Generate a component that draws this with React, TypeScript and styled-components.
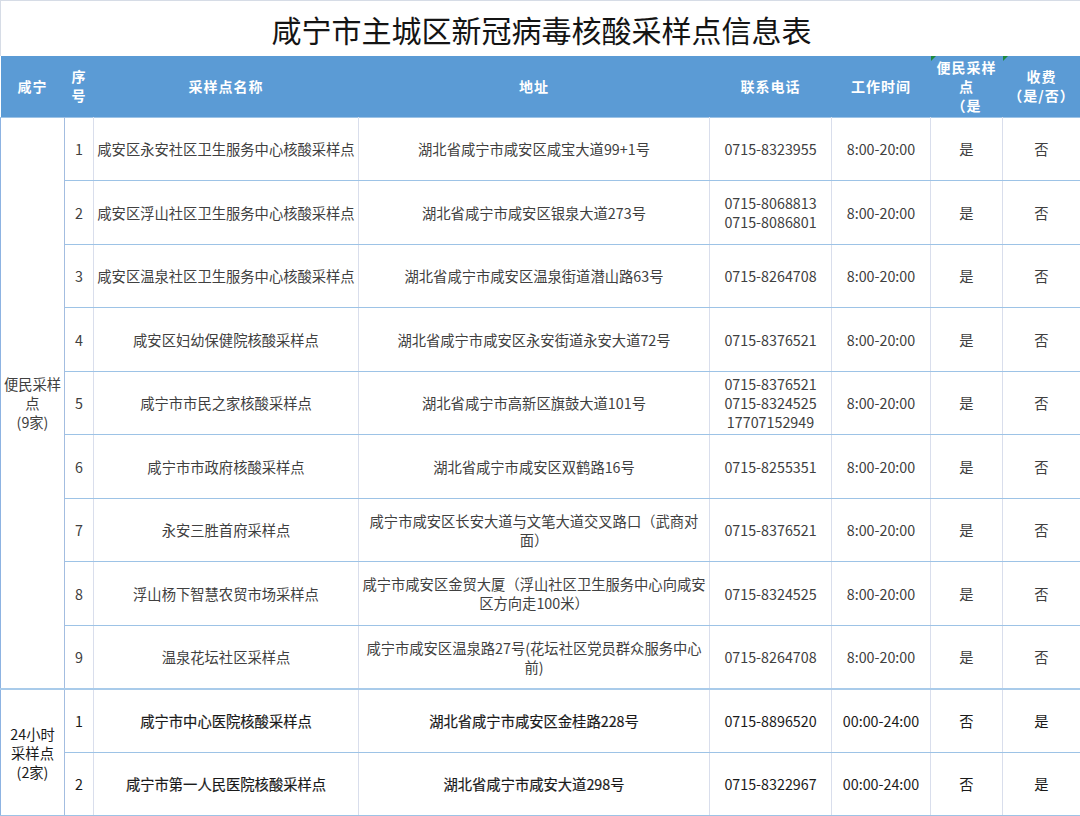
import React from "react";
import styled, { createGlobalStyle, css } from "styled-components";

const Global = createGlobalStyle`
  html, body { margin: 0; padding: 0; background: #ffffff; }
  body { font-family: "Noto Sans CJK SC", "Noto Sans", sans-serif; }
`;

const Sheet = styled.table`
  width: 1080px;
  table-layout: fixed;
  border-collapse: collapse;
  font-family: "Noto Sans CJK SC", "Noto Sans", sans-serif;
`;

const TitleCell = styled.td`
  height: 55px;
  padding: 0 0 0 2px;
  text-align: center;
  vertical-align: middle;
  font-size: 30px;
  font-weight: 400;
  line-height: 34px;
  color: #141414;
  border: 1px solid #d6dce6;
  border-bottom: none;
`;

const HeadRow = styled.tr`
  height: 61px;
  background: #5b9bd5;
`;

const HeadCell = styled.th`
  position: relative;
  padding: 0;
  color: #ffffff;
  font-size: 14px;
  font-weight: 700;
  line-height: 19px;
  letter-spacing: 1px;
  text-align: center;
  vertical-align: middle;
  background: #5b9bd5;
  border: none;
`;

const Marker = styled.span`
  position: absolute;
  left: 0;
  top: 0;
  width: 0;
  height: 0;
  border-top: 5px solid #1f8a3c;
  border-right: 5px solid transparent;
`;

const BodyRow = styled.tr<{ $sep?: boolean }>`
  height: 63.5px;
  ${(p) =>
    p.$sep &&
    css`
      border-top: 2px solid #a9cbea;
    `}
`;

const Cell = styled.td<{ $strong?: boolean; $group?: boolean; $dark?: boolean }>`
  padding: 0 3px;
  text-align: center;
  vertical-align: middle;
  font-size: 14.3px;
  line-height: 19px;
  color: ${(p) => (p.$strong || p.$dark ? "#1a1a1a" : "#404040")};
  font-weight: 400;
  -webkit-text-stroke: ${(p) => (p.$strong ? "0.2px #1a1a1a" : "0")};
  border-top: 1px solid #9dc3e6;
  border-bottom: 1px solid #9dc3e6;
  border-left: 1px solid #d9deec;
  border-right: 1px solid #d9deec;
  &:last-child {
    border-right: 1px solid #a6c4e6;
  }
  ${(p) =>
    p.$group &&
    css`
      padding: 0 1px;
      border-left: 1px solid #8db3e2;
      border-right: 1px solid #a3bde0;
    `}
`;

type Row = {
  no: number;
  name: string;
  addr: string;
  phones: string[];
  time: string;
  conv: string;
  fee: string;
};

const regular: Row[] = [
  { no: 1, name: "咸安区永安社区卫生服务中心核酸采样点", addr: "湖北省咸宁市咸安区咸宝大道99+1号", phones: ["0715-8323955"], time: "8:00-20:00", conv: "是", fee: "否" },
  { no: 2, name: "咸安区浮山社区卫生服务中心核酸采样点", addr: "湖北省咸宁市咸安区银泉大道273号", phones: ["0715-8068813", "0715-8086801"], time: "8:00-20:00", conv: "是", fee: "否" },
  { no: 3, name: "咸安区温泉社区卫生服务中心核酸采样点", addr: "湖北省咸宁市咸安区温泉街道潜山路63号", phones: ["0715-8264708"], time: "8:00-20:00", conv: "是", fee: "否" },
  { no: 4, name: "咸安区妇幼保健院核酸采样点", addr: "湖北省咸宁市咸安区永安街道永安大道72号", phones: ["0715-8376521"], time: "8:00-20:00", conv: "是", fee: "否" },
  { no: 5, name: "咸宁市市民之家核酸采样点", addr: "湖北省咸宁市高新区旗鼓大道101号", phones: ["0715-8376521", "0715-8324525", "17707152949"], time: "8:00-20:00", conv: "是", fee: "否" },
  { no: 6, name: "咸宁市市政府核酸采样点", addr: "湖北省咸宁市咸安区双鹤路16号", phones: ["0715-8255351"], time: "8:00-20:00", conv: "是", fee: "否" },
  { no: 7, name: "永安三胜首府采样点", addr: "咸宁市咸安区长安大道与文笔大道交叉路口（武商对面）", phones: ["0715-8376521"], time: "8:00-20:00", conv: "是", fee: "否" },
  { no: 8, name: "浮山杨下智慧农贸市场采样点", addr: "咸宁市咸安区金贸大厦（浮山社区卫生服务中心向咸安区方向走100米）", phones: ["0715-8324525"], time: "8:00-20:00", conv: "是", fee: "否" },
  { no: 9, name: "温泉花坛社区采样点", addr: "咸宁市咸安区温泉路27号(花坛社区党员群众服务中心前)", phones: ["0715-8264708"], time: "8:00-20:00", conv: "是", fee: "否" },
];

const allDay: Row[] = [
  { no: 1, name: "咸宁市中心医院核酸采样点", addr: "湖北省咸宁市咸安区金桂路228号", phones: ["0715-8896520"], time: "00:00-24:00", conv: "否", fee: "是" },
  { no: 2, name: "咸宁市第一人民医院核酸采样点", addr: "湖北省咸宁市咸安大道298号", phones: ["0715-8322967"], time: "00:00-24:00", conv: "否", fee: "是" },
];

const Lines: React.FC<{ items: string[] }> = ({ items }) => (
  <>
    {items.map((t, i) => (
      <React.Fragment key={i}>
        {i > 0 && <br />}
        {t}
      </React.Fragment>
    ))}
  </>
);

const DataCells: React.FC<{ r: Row; strong?: boolean }> = ({ r, strong }) => (
  <>
    <Cell $dark={strong}>{r.no}</Cell>
    <Cell $strong={strong}>{r.name}</Cell>
    <Cell $strong={strong}>{r.addr}</Cell>
    <Cell $dark={strong}>
      <Lines items={r.phones} />
    </Cell>
    <Cell $dark={strong}>{r.time}</Cell>
    <Cell $dark={strong}>{r.conv}</Cell>
    <Cell $dark={strong}>{r.fee}</Cell>
  </>
);

export default function App() {
  return (
    <>
      <Global />
      <Sheet>
        <colgroup>
          <col style={{ width: 64 }} />
          <col style={{ width: 29 }} />
          <col style={{ width: 265 }} />
          <col style={{ width: 351 }} />
          <col style={{ width: 122 }} />
          <col style={{ width: 99 }} />
          <col style={{ width: 72 }} />
          <col style={{ width: 78 }} />
        </colgroup>
        <tbody>
          <tr>
            <TitleCell colSpan={8}>咸宁市主城区新冠病毒核酸采样点信息表</TitleCell>
          </tr>
          <HeadRow>
            <HeadCell>咸宁</HeadCell>
            <HeadCell>
              序<br />号
            </HeadCell>
            <HeadCell>采样点名称</HeadCell>
            <HeadCell>地址</HeadCell>
            <HeadCell>联系电话</HeadCell>
            <HeadCell>工作时间</HeadCell>
            <HeadCell>
              <Marker />
              便民采样
              <br />点<br />（是
            </HeadCell>
            <HeadCell>
              <Marker />
              收费
              <br />（是/否）
            </HeadCell>
          </HeadRow>
          {regular.map((r, i) => (
            <BodyRow key={`a${r.no}`}>
              {i === 0 && (
                <Cell $group rowSpan={regular.length}>
                  便民采样点
                  <br />
                  (9家)
                </Cell>
              )}
              <DataCells r={r} />
            </BodyRow>
          ))}
          {allDay.map((r, i) => (
            <BodyRow key={`b${r.no}`} $sep={i === 0}>
              {i === 0 && (
                <Cell $group $dark rowSpan={allDay.length}>
                  24小时
                  <br />
                  采样点
                  <br />
                  (2家)
                </Cell>
              )}
              <DataCells r={r} strong />
            </BodyRow>
          ))}
        </tbody>
      </Sheet>
    </>
  );
}
